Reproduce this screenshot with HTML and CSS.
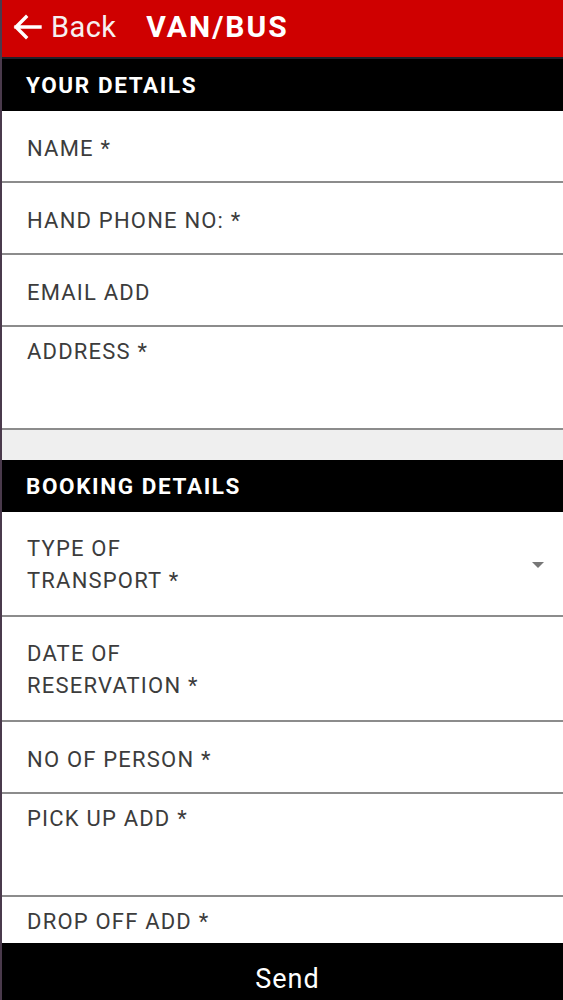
FILE: index.html
```html
<!DOCTYPE html>
<html>
<head>
<meta charset="utf-8">
<link rel="stylesheet" href="styles.css">
</head>
<body>
<div class="app">
  <header class="topbar">
    <div class="back">
      <svg class="back-arrow" width="30" height="26" viewBox="0 0 30 26"><path d="M28 13H4M14 3L4 13L14 23" fill="none" stroke="#fff" stroke-width="3.4" stroke-linecap="square"/></svg>
      <span>Back</span>
    </div>
    <div class="title">VAN/BUS</div>
  </header>
  <div class="section-head">YOUR DETAILS</div>
  <div class="row">NAME *</div>
  <div class="row">HAND PHONE NO: *</div>
  <div class="row">EMAIL ADD</div>
  <div class="row tall">ADDRESS *</div>
  <div class="gap"></div>
  <div class="section-head">BOOKING DETAILS</div>
  <div class="row two select"><span>TYPE OF<br>TRANSPORT *</span><span class="caret"></span></div>
  <div class="row two">DATE OF<br>RESERVATION *</div>
  <div class="row">NO OF PERSON *</div>
  <div class="row tall">PICK UP ADD *</div>
  <div class="row short">DROP OFF ADD *</div>
  <div class="send">Send</div>
</div>
</body>
</html>
```
FILE: styles.css
```css
html, body { margin: 0; padding: 0; }
body { font-family: Roboto, "Liberation Sans", Arial, sans-serif; background: #fff; }
.app {
  width: 563px;
  height: 1000px;
  overflow: hidden;
  border-left: 2px solid #4a3a4c;
  box-sizing: border-box;
  display: flex;
  flex-direction: column;
}
.topbar {
  height: 59px;
  background: #cf0000;
  display: flex;
  align-items: center;
  color: #fff;
  border-bottom: 2px solid #20202a;
  flex-shrink: 0;
  box-sizing: border-box;
  padding-bottom: 4px;
}
.back {
  display: flex;
  align-items: center;
  margin-left: 10px;
  font-size: 29px;
  gap: 9px;
  color: #f6f0f0;
  letter-spacing: 0.4px;
}
.title {
  margin-left: 30px;
  font-size: 30px;
  font-weight: bold;
  letter-spacing: 2px;
}
.section-head {
  height: 52px;
  background: #000;
  color: #fff;
  font-size: 22.5px;
  font-weight: bold;
  letter-spacing: 1.6px;
  display: flex;
  align-items: center;
  padding-left: 24px;
  flex-shrink: 0;
  box-sizing: border-box;
}
.row {
  height: 72px;
  border-bottom: 2px solid #8c8c8c;
  box-sizing: border-box;
  display: flex;
  align-items: center;
  padding-left: 25px;
  padding-top: 6px;
  font-size: 22px;
  letter-spacing: 1.2px;
  color: #3c3c3c;
  flex-shrink: 0;
  line-height: 32px;
}
.row.tall {
  height: 103px;
  align-items: flex-start;
  padding-top: 9px;
}
.row.two {
  height: 105px;
  padding-top: 3px;
  padding-bottom: 0;
}
.row.select { justify-content: space-between; padding-right: 19px; }
.caret {
  width: 0; height: 0;
  border-left: 6px solid transparent;
  border-right: 6px solid transparent;
  border-top: 6px solid #777;
  margin-top: 0;
}
.row.short { height: 46px; border-bottom: none; padding-top: 4px; }
.gap {
  height: 30px;
  background: #efefef;
  flex-shrink: 0;
}
.send {
  flex: 1;
  background: #000;
  color: #fff;
  font-size: 27px;
  letter-spacing: 1px;
  display: flex;
  justify-content: center;
  align-items: center;
  padding-top: 14px;
  padding-left: 10px;
}
```
